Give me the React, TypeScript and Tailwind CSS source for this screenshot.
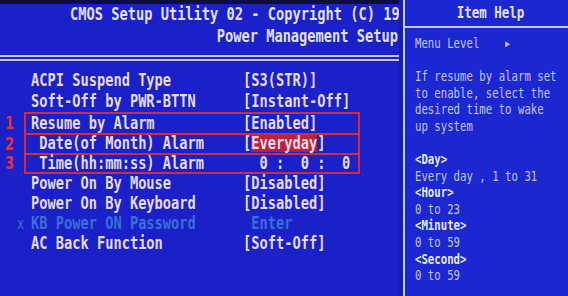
import React from "react";

type Row = {
  label: string;
  value: React.ReactNode;
  h?: string;
};

const S = ({ children, className = "" }: { children: React.ReactNode; className?: string }) => (
  <span className={`inline-block scale-y-[1.3] whitespace-pre ${className}`}>{children}</span>
);

const boxedRows: (Row & { num: string; h: string })[] = [
  { num: "1", label: "Resume by Alarm", value: "[Enabled]", h: "h-[19px]" },
  {
    num: "2",
    label: " Date(of Month) Alarm",
    value: (
      <>
        [<span className="inline-block leading-[13px] bg-[#b9233f] text-[#f3dce6]">Everyday</span>]
      </>
    ),
    h: "h-[20px]",
  },
  { num: "3", label: " Time(hh:mm:ss) Alarm", value: "  0 :  0 :  0", h: "h-[19px]" },
];

const help: { text: string; bold?: boolean }[] = [
  { text: "If resume by alarm set" },
  { text: "to enable, select the" },
  { text: "desired time to wake" },
  { text: "up system" },
  { text: "" },
  { text: "<Day>", bold: true },
  { text: "Every day , 1 to 31" },
  { text: "<Hour>", bold: true },
  { text: "0 to 23" },
  { text: "<Minute>", bold: true },
  { text: "0 to 59" },
  { text: "<Second>", bold: true },
  { text: "0 to 59" },
];

function MenuRow({ label, value, h = "h-[20.6px]" }: Row) {
  return (
    <div className={`${h} flex items-center pl-[31px]`}>
      <span className="w-[212px] shrink-0">
        <S>{label}</S>
      </span>
      <S>{value}</S>
    </div>
  );
}

export default function App() {
  return (
    <div className="w-[568px] h-[296px] flex overflow-hidden bg-[#1a21c9] text-[#e6dbee] font-['DejaVu_Sans_Mono','Liberation_Mono',monospace] leading-none">
      {/* main setup panel */}
      <div className="w-[399px] shrink-0 flex flex-col">
        <div className="h-[4px] bg-[#0c0d3a]" />
        <div className="h-[22px] flex items-center pl-[70px] whitespace-nowrap overflow-hidden font-bold text-[13.7px] text-[#e2e0f6]">
          <S>CMOS Setup Utility 02 - Copyright (C) 1998</S>
        </div>
        <div className="h-[21px] flex items-center justify-end pr-[1px] font-bold text-[13.7px] text-[#e2e0f6]">
          <S>Power Management Setup</S>
        </div>
        <div className="mt-[8px] h-[2px] bg-[#c9c6ee]" />
        <div className="mt-[2px] h-[2px] bg-[#c9c6ee]" />

        <div className="mt-[10px] flex flex-col font-bold text-[13.7px]">
          <MenuRow label="ACPI Suspend Type" value="[S3(STR)]" />
          <MenuRow label="Soft-Off by PWR-BTTN" value="[Instant-Off]" />

          <div className="relative ml-[24px] w-[336px] border-2 border-[#d42a3c]">
            {boxedRows.map((r, i) => (
              <div
                key={r.num}
                className={`relative ${r.h} flex items-center pl-[5px] ${i > 0 ? "border-t-2 border-[#d42a3c]" : ""}`}
              >
                <span className="absolute left-[-21px] text-[#e8303e] font-['DejaVu_Sans','Liberation_Sans',sans-serif] font-bold text-[13px]">
                  <S>{r.num}</S>
                </span>
                <span className="w-[212px] shrink-0">
                  <S>{r.label}</S>
                </span>
                <S>{r.value}</S>
              </div>
            ))}
          </div>

          <MenuRow label="Power On By Mouse" value="[Disabled]" h="h-[20px]" />
          <MenuRow label="Power On By Keyboard" value="[Disabled]" h="h-[20px]" />
          <div className="h-[20px] flex items-center pl-[17px] text-[#3b6fd8]">
            <span className="w-[14px] shrink-0 font-normal text-[12px]">
              <S>x</S>
            </span>
            <span className="w-[212px] shrink-0">
              <S>KB Power ON Password</S>
            </span>
            <S> Enter</S>
          </div>
          <MenuRow label="AC Back Function" value="[Soft-Off]" h="h-[20px]" />
        </div>
      </div>

      {/* separator */}
      <div className="w-[4px] shrink-0 bg-[#1520a4]" />
      <div className="w-[2px] shrink-0 bg-[#c6c4ee]" />

      {/* item help panel */}
      <div className="flex-1 flex flex-col bg-[#1b28d2]">
        <div className="h-[26px] flex items-center justify-center pl-[8px] font-bold text-[12.5px] text-[#e6e2f6]">
          <S>Item Help</S>
        </div>
        <div className="h-[2px] bg-[#c6c4ee]" />
        <div className="pt-[8px] pl-[10px] flex flex-col text-[10.7px] text-[#c3c4f0]">
          <div className="h-[16.6px] flex items-center">
            <S>Menu Level    </S>
            <span className="text-[8px] scale-y-[1.3] inline-block">▶</span>
          </div>
          <div className="h-[16.6px]" />
          {help.map((h, i) => (
            <div
              key={i}
              className={`h-[16.6px] flex items-center ${h.bold ? "font-bold text-[#e8e6f8]" : ""}`}
            >
              <S>{h.text}</S>
            </div>
          ))}
        </div>
      </div>
    </div>
  );
}
